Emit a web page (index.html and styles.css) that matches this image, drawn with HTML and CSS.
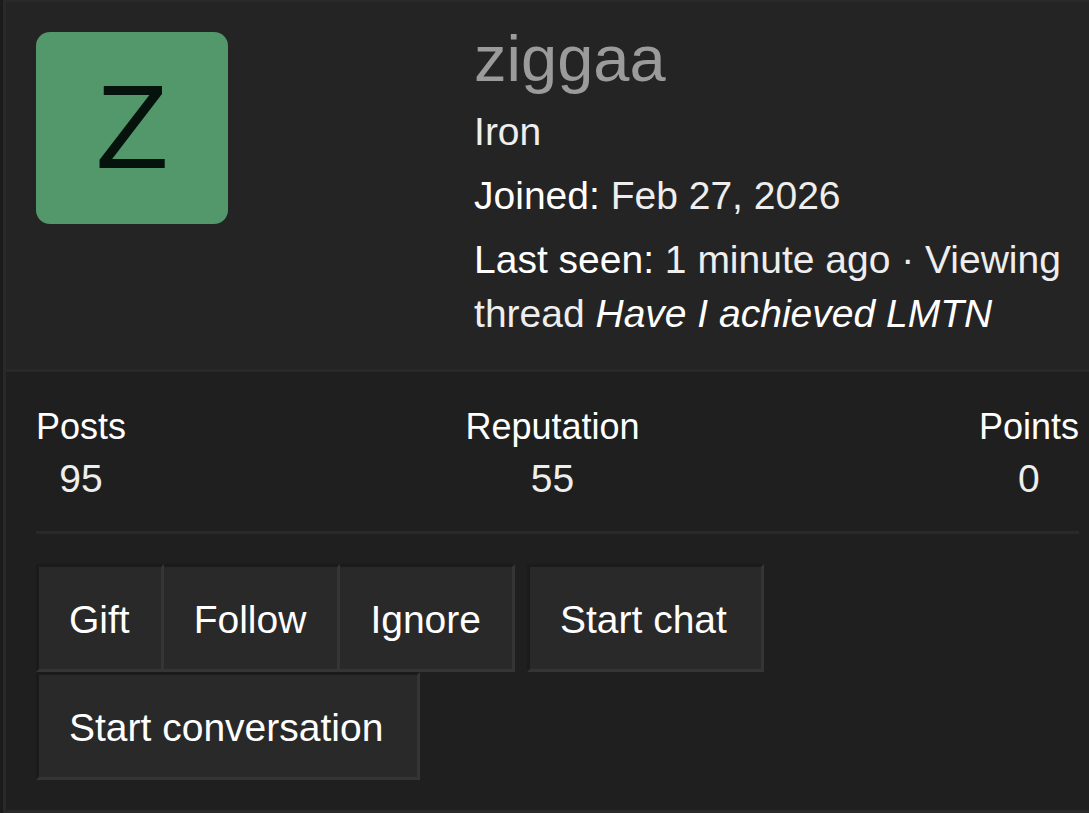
FILE: index.html
```
<!DOCTYPE html>
<html lang="en">
<head>
<meta charset="utf-8">
<meta name="viewport" content="width=device-width, initial-scale=1">
<title>ziggaa</title>
<link rel="stylesheet" href="styles.css">
</head>
<body>
<article class="member-card">
  <header class="member-header">
    <a class="avatar" href="#profile" aria-label="ziggaa's profile">Z</a>
    <div class="member-info">
      <h1 class="member-name"><a href="#profile">ziggaa</a></h1>
      <p class="member-line">Iron</p>
      <dl class="member-line"><dt>Joined:</dt> <dd>Feb 27, 2026</dd></dl>
      <dl class="member-line"><dt>Last seen:</dt> <dd>1 minute ago · Viewing thread <a class="thread-link" href="#thread">Have I achieved LMTN</a></dd></dl>
    </div>
  </header>
  <div class="member-body">
    <div class="stats">
      <dl class="stat"><dt>Posts</dt><dd>95</dd></dl>
      <dl class="stat"><dt>Reputation</dt><dd>55</dd></dl>
      <dl class="stat"><dt>Points</dt><dd>0</dd></dl>
    </div>
    <hr class="rule">
    <div class="actions">
      <div class="button-group">
        <button class="button" type="button">Gift</button>
        <button class="button" type="button">Follow</button>
        <button class="button" type="button">Ignore</button>
      </div>
      <button class="button" type="button">Start chat</button>
      <button class="button" type="button">Start conversation</button>
    </div>
  </div>
</article>
</body>
</html>
```
FILE: styles.css
```
* {
  box-sizing: border-box;
}

body {
  margin: 0;
  padding-left: 3px;
  background: #1b1b1b;
  color: #eee;
  font-family: "Liberation Sans", Arial, sans-serif;
  font-size: 39px;
  line-height: 54px;
}

h1, p, dl, dt, dd {
  margin: 0;
}

a {
  color: inherit;
  text-decoration: none;
}

.member-card {
  border: solid #292929;
  border-width: 2px 0 3px 3px;
  background: #1f1f1f;
}

.member-header {
  display: grid;
  grid-template-columns: 42% 1fr;
  padding: 30px 10px 28px 30px;
  border-bottom: 3px solid #292929;
  background: #242424;
}

.avatar {
  display: flex;
  align-items: center;
  justify-content: center;
  width: 192px;
  height: 192px;
  padding-bottom: 4px;
  border-radius: 14px;
  background: #53986b;
  color: #06130c;
  font-size: 119px;
  line-height: 1;
}

.member-name {
  margin-bottom: 19px;
  color: #9b9b9b;
  font-size: 65px;
  font-weight: 400;
  line-height: 54px;
}

.member-line + .member-line {
  margin-top: 10px;
}

.member-line dt,
.member-line dd {
  display: inline;
}

dt,
.thread-link {
  color: #fff;
}

.thread-link {
  font-style: italic;
}

.member-body {
  padding: 30px 10px 30px 30px;
}

.stats {
  display: flex;
  justify-content: space-between;
  text-align: center;
}

.stat dt {
  font-size: 36px;
  line-height: 50px;
}

.rule {
  height: 3px;
  margin: 25px 0 30px;
  border: 0;
  background: #292929;
}

.actions {
  display: flex;
  flex-wrap: wrap;
  column-gap: 12px;
}

.button-group {
  display: flex;
}

.button {
  padding: 26px 34px 22px 30px;
  border: 3px solid;
  border-color: #1b1b1b #353535 #353535 #1b1b1b;
  background: #292929;
  color: #fff;
  font: inherit;
}

.button-group .button {
  padding-right: 31px;
}

.button-group .button + .button {
  border-left: 0;
}
```
